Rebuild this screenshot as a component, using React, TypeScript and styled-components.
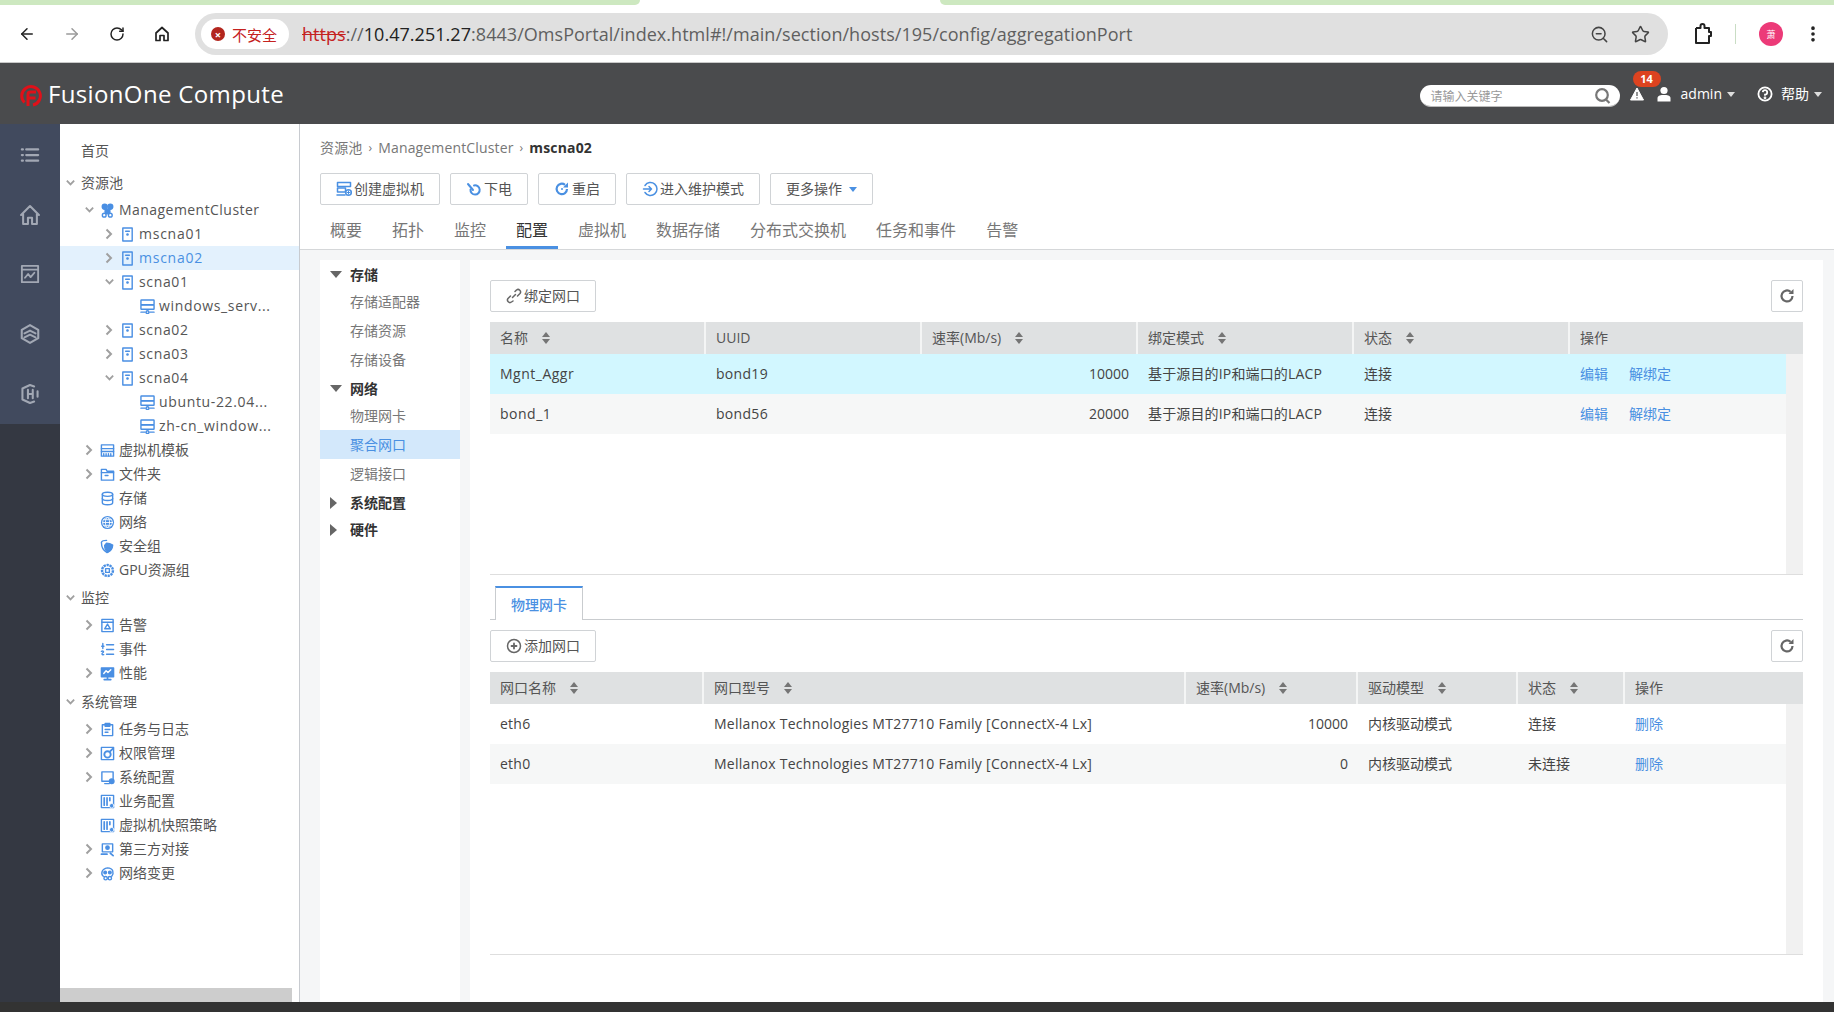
import React from "react";
import styled, { createGlobalStyle } from "styled-components";
import { ArrowLeft, ArrowRight, RotateCw, Star, MoreVertical, ZoomOut } from "lucide-react";

const FONT = `"Open Sans", "Noto Sans CJK SC", sans-serif`;

const Global = createGlobalStyle`
  html, body { margin: 0; padding: 0; background: #fff; }
  body { font-family: ${FONT}; font-size: 14px; color: #444; overflow: hidden; }
  * { box-sizing: border-box; }
`;

const Page = styled.div`
  width: 1834px;
  height: 1012px;
  display: flex;
  flex-direction: column;
  overflow: hidden;
`;

/* ---------- browser chrome ---------- */
const TabStrip = styled.div`
  height: 5px;
  display: flex;
  justify-content: space-between;
  background: #fff;
`;
const TabStripPiece = styled.div<{ $w: number; $side: "left" | "right" }>`
  width: ${(p) => p.$w}px;
  background: #cde8c0;
  border-bottom-${(p) => (p.$side === "left" ? "right" : "left")}-radius: 8px;
`;
const BrowserBar = styled.div`
  height: 58px;
  display: flex;
  align-items: center;
  background: #fff;
  border-bottom: 1px solid #c9c9c9;
  padding: 1px 0 0 18px;
`;
const NavButton = styled.span<{ $muted?: boolean }>`
  width: 18px;
  height: 18px;
  margin-right: 27px;
  display: flex;
  align-items: center;
  justify-content: center;
  color: ${(p) => (p.$muted ? "#9a9a9a" : "#222")};
`;
const AddressBar = styled.div`
  width: 1473px;
  height: 42px;
  margin-left: -3px;
  border-radius: 21px;
  background: #e0e0e0;
  display: flex;
  align-items: center;
  padding: 0 6px;
`;
const SecurityChip = styled.div`
  width: 88px;
  height: 30px;
  border-radius: 15px;
  background: #fff;
  display: flex;
  align-items: center;
  padding-left: 10px;
  gap: 7px;
  color: #c5221f;
  font-size: 15px;
  flex: none;
`;
const DangerDot = styled.span`
  width: 14px;
  height: 14px;
  border-radius: 50%;
  background: #b3261e;
  color: #fff;
  display: flex;
  align-items: center;
  justify-content: center;
  font-size: 11px;
  font-weight: 700;
  line-height: 1;
`;
const Url = styled.div`
  margin-left: 13px;
  font-size: 18px;
  letter-spacing: 0.04px;
  color: #5f5f5f;
  white-space: nowrap;
  flex: 1;
`;
const UrlScheme = styled.span`
  color: #c5221f;
  text-decoration: line-through;
`;
const UrlHost = styled.span`
  color: #222;
`;
const BarIcon = styled.span<{ $ml: number }>`
  display: flex;
  margin-left: ${(p) => p.$ml}px;
  color: #444;
`;
const BarDivider = styled.span`
  width: 1px;
  height: 20px;
  background: #c9ddc4;
  margin-left: 22px;
`;
const Avatar = styled.span`
  width: 24px;
  height: 24px;
  margin-left: 23px;
  border-radius: 50%;
  background: #ec3a78;
  color: #fff;
  font-size: 9px;
  display: flex;
  align-items: center;
  justify-content: center;
`;

/* ---------- product header ---------- */
const Header = styled.header`
  height: 61px;
  display: flex;
  align-items: center;
  background: #4a4b4d;
  padding: 0 12px 0 20px;
  color: #fff;
`;
const LogoMark = styled.span`
  display: flex;
  margin-top: 5px;
`;
const LogoText = styled.div`
  margin-left: 5px;
  font-size: 24px;
  line-height: 30px;
  letter-spacing: 0.35px;
`;
const HeaderRight = styled.div`
  margin-left: auto;
  display: flex;
  align-items: center;
`;
const SearchBox = styled.div`
  width: 200px;
  height: 22px;
  margin-top: 5px;
  border-radius: 11px;
  background: #fff;
  border-bottom: 1px solid #bbb;
  display: flex;
  align-items: center;
  justify-content: space-between;
  padding: 0 8px 0 11px;
  font-size: 12px;
  color: #999;
`;
const BellWrap = styled.span`
  position: relative;
  display: flex;
  margin-left: 10px;
  width: 14px;
  height: 14px;
`;
const Badge = styled.span`
  position: absolute;
  left: 3px;
  top: -16px;
  width: 28px;
  height: 16px;
  border-radius: 8px;
  background: #dc4320;
  color: #fff;
  font-size: 11px;
  font-weight: 700;
  line-height: 16px;
  text-align: center;
`;
const HeaderText = styled.span<{ $ml: number }>`
  margin-left: ${(p) => p.$ml}px;
  font-size: 14px;
  line-height: 20px;
`;
const HeaderIcon = styled.span<{ $ml: number }>`
  display: flex;
  margin-left: ${(p) => p.$ml}px;
`;
const WhiteCaret = styled.span`
  width: 0;
  height: 0;
  margin-left: 5px;
  margin-top: 2px;
  border-left: 4px solid transparent;
  border-right: 4px solid transparent;
  border-top: 5px solid #ddd;
`;

/* ---------- body ---------- */
const Body = styled.div`
  flex: 1;
  display: flex;
  min-height: 0;
`;
const Rail = styled.nav`
  width: 60px;
  background: #343842;
  flex: none;
`;
const RailTop = styled.div`
  height: 300px;
  background: #414a5e;
  color: #a2a8b4;
  display: flex;
  flex-direction: column;
  padding-top: 1px;
`;
const RailSlot = styled.span`
  height: 60px;
  display: flex;
  align-items: center;
  justify-content: center;
`;
const TreePanel = styled.aside`
  width: 240px;
  flex: none;
  background: #fff;
  border-right: 1px solid #c8cbd0;
  display: flex;
  flex-direction: column;
  padding-top: 15px;
`;
const TreeRow = styled.div<{ $level: number; $selected?: boolean; $heading?: boolean; $gap?: number }>`
  height: 24px;
  flex: none;
  display: flex;
  align-items: center;
  padding-left: ${(p) => [5, 24, 44, 64][p.$level]}px;
  margin-top: ${(p) => p.$gap ?? 0}px;
  margin-bottom: ${(p) => (p.$heading ? 3 : 0)}px;
  background: ${(p) => (p.$selected ? "#e3f1fd" : "transparent")};
  color: ${(p) => (p.$selected ? "#4a90e2" : "#555")};
`;
const ArrowSlot = styled.span`
  width: 16px;
  height: 16px;
  flex: none;
  display: flex;
  align-items: center;
  color: #999;
`;
const IconSlot = styled.span`
  width: 19px;
  flex: none;
  display: flex;
  color: #4a8fe3;
`;
const TreeLabel = styled.span<{ $spacing?: number }>`
  line-height: 20px;
  white-space: nowrap;
  letter-spacing: ${(p) => p.$spacing ?? 0}px;
`;
const TreeScroll = styled.div`
  margin-top: auto;
  height: 14px;
  flex: none;
  width: 232px;
  background: #cdcdcd;
`;

const Main = styled.main`
  flex: 1;
  min-width: 0;
  display: flex;
  flex-direction: column;
`;
const MainHead = styled.div`
  height: 126px;
  flex: none;
  background: #fff;
  border-bottom: 1px solid #d5d7d9;
  padding: 14px 0 0 20px;
`;
const Crumbs = styled.div`
  display: flex;
  align-items: center;
  height: 20px;
  color: #777;
  line-height: 20px;
  letter-spacing: 0.15px;
`;
const CrumbSep = styled.span`
  margin: 0 6px;
  font-size: 12px;
  color: #777;
`;
const CrumbCurrent = styled.span`
  font-weight: 700;
  color: #333;
`;
const Toolbar = styled.div`
  display: flex;
  gap: 10px;
  margin-top: 15px;
`;
const Button = styled.div<{ $icon?: boolean }>`
  height: 32px;
  flex: none;
  display: inline-flex;
  align-items: center;
  justify-content: center;
  gap: 2px;
  padding: 0 ${(p) => (p.$icon ? 0 : 15)}px;
  width: ${(p) => (p.$icon ? "32px" : "auto")};
  background: #fff;
  border: 1px solid #d0d3d6;
  border-radius: 2px;
  color: #555;
  line-height: 20px;
`;
const ButtonIcon = styled.span<{ $grey?: boolean }>`
  display: flex;
  color: ${(p) => (p.$grey ? "#666" : "#4a90e2")};
`;
const BlueCaret = styled.span`
  width: 0;
  height: 0;
  margin-left: 5px;
  border-left: 4px solid transparent;
  border-right: 4px solid transparent;
  border-top: 5px solid #4a90e2;
`;
const Tabs = styled.div`
  display: flex;
  gap: 10px;
  height: 44px;
`;
const Tab = styled.div<{ $active?: boolean }>`
  height: 44px;
  padding: 13px 10px 0;
  font-size: 16px;
  line-height: 24px;
  color: ${(p) => (p.$active ? "#333" : "#777")};
  border-bottom: 3px solid ${(p) => (p.$active ? "#4a90e2" : "transparent")};
`;
const ConfigArea = styled.div`
  flex: 1;
  min-height: 0;
  display: flex;
  gap: 10px;
  background: #f5f6f7;
  padding: 10px 11px 0 20px;
`;
const ConfigMenu = styled.div`
  width: 140px;
  flex: none;
  background: #fff;
`;
const MenuHeading = styled.div`
  height: 25px;
  margin-top: 2px;
  display: flex;
  align-items: center;
  padding-left: 10px;
  font-weight: 700;
  color: #333;
  line-height: 20px;
`;
const MenuTriangle = styled.span<{ $open?: boolean }>`
  width: 20px;
  flex: none;
  &::before {
    content: "";
    display: block;
    width: 0;
    height: 0;
    ${(p) =>
      p.$open
        ? `border-left: 6px solid transparent; border-right: 6px solid transparent; border-top: 7px solid #666;`
        : `border-top: 6px solid transparent; border-bottom: 6px solid transparent; border-left: 7px solid #666;`}
  }
`;
const MenuItem = styled.div<{ $active?: boolean }>`
  height: 29px;
  display: flex;
  align-items: center;
  padding-left: 30px;
  line-height: 20px;
  color: ${(p) => (p.$active ? "#4a90e2" : "#777")};
  background: ${(p) => (p.$active ? "#d3e8fb" : "transparent")};
`;
const ContentPanel = styled.section`
  flex: 1;
  min-width: 0;
  background: #fff;
  padding: 20px 20px 0;
`;
const TableTools = styled.div`
  display: flex;
  justify-content: space-between;
  margin-bottom: 10px;
`;
const HeadRow = styled.div<{ $cols: string }>`
  height: 32px;
  display: grid;
  grid-template-columns: ${(p) => p.$cols};
  background: #dfe1e2;
`;
const HeadCell = styled.div<{ $last?: boolean }>`
  display: flex;
  align-items: center;
  padding-left: 10px;
  color: #555;
  line-height: 20px;
  border-right: ${(p) => (p.$last ? "0" : "2px solid #f4f5f5")};
`;
const SortIcon = styled.span`
  display: flex;
  flex-direction: column;
  gap: 2px;
  margin-left: 14px;
  &::before,
  &::after {
    content: "";
    width: 0;
    height: 0;
    border-left: 4px solid transparent;
    border-right: 4px solid transparent;
  }
  &::before { border-bottom: 5px solid #757575; }
  &::after { border-top: 5px solid #757575; }
`;
const TableBody = styled.div<{ $h: number }>`
  height: ${(p) => p.$h}px;
  display: flex;
  border-bottom: 1px solid #dedede;
`;
const Rows = styled.div`
  flex: 1;
  min-width: 0;
`;
const Track = styled.div`
  width: 17px;
  flex: none;
  background: #f1f1f1;
`;
const Row = styled.div<{ $cols: string; $bg: string }>`
  height: 40px;
  display: grid;
  grid-template-columns: ${(p) => p.$cols};
  background: ${(p) => p.$bg};
`;
const Cell = styled.div<{ $right?: boolean; $pr?: number; $ls?: number }>`
  display: flex;
  align-items: center;
  justify-content: ${(p) => (p.$right ? "flex-end" : "flex-start")};
  padding: 0 ${(p) => p.$pr ?? 10}px 0 10px;
  color: #444;
  line-height: 20px;
  letter-spacing: ${(p) => p.$ls ?? 0}px;
  white-space: nowrap;
  overflow: hidden;
`;
const TableLink = styled.span`
  color: #4a90e2;
  margin-right: 21px;
`;
const SubTabs = styled.div`
  margin-top: 11px;
  height: 34px;
  border-bottom: 1px solid #c9cccf;
  padding-left: 5px;
  display: flex;
  margin-bottom: 10px;
`;
const SubTab = styled.div`
  width: 88px;
  height: 34px;
  border: 1px solid #c9cccf;
  border-top: 2px solid #4a90e2;
  border-bottom: 0;
  background: #fff;
  color: #4a90e2;
  font-size: 14px;
  font-weight: 500;
  display: flex;
  align-items: center;
  justify-content: center;
`;
const BottomBar = styled.div`
  height: 10px;
  flex: none;
  background: #333;
`;

/* ---------- icons ---------- */
const Svg = ({ s = 16, children, vb = "0 0 16 16", sw = 1.5 }: { s?: number; children: React.ReactNode; vb?: string; sw?: number }) => (
  <svg width={s} height={s} viewBox={vb} fill="none" stroke="currentColor" strokeWidth={sw} strokeLinecap="round" strokeLinejoin="round">
    {children}
  </svg>
);

const Down = () => (
  <svg width="11" height="8" viewBox="0 0 12 8" fill="none" stroke="#a0a0a0" strokeWidth="2"><path d="M2 1.500 L6 5.500 L10 1.500" /></svg>
);
const Right = () => (
  <svg width="8" height="12" viewBox="0 0 8 12" fill="none" stroke="#a0a0a0" strokeWidth="2" style={{ marginLeft: 1 }}><path d="M1.500 1.500 L6 6 L1.500 10.500" /></svg>
);

const GearDot = () => <circle cx="12.500" cy="12.500" r="2.400" fill="currentColor" stroke="#fff" strokeWidth="0.800" />;

const icons: Record<string, React.ReactNode> = {
  cluster: (<><circle cx="5" cy="4" r="2.600" fill="currentColor" /><circle cx="11" cy="4" r="2.600" fill="currentColor" /><circle cx="8" cy="9" r="2.600" fill="currentColor" /><circle cx="4.500" cy="13" r="2" /><circle cx="11" cy="13" r="2" /></>),
  host: (<><rect x="3" y="1" width="10" height="14" /><path d="M6 4.500h4" /><circle cx="8" cy="8" r="0.700" fill="currentColor" /></>),
  vm: (<><rect x="1" y="1" width="14" height="5" rx="0.500" /><rect x="1" y="6.500" width="14" height="4.500" rx="0.500" /><path d="M1 14h4.500M10.500 14h4.500" /><circle cx="8" cy="14" r="1.500" /></>),
  template: (<><rect x="1.500" y="2" width="13" height="12" /><path d="M1.500 6h13M1.500 9h13" /><path d="M4 11.500v2M6.500 11.500v2M9 11.500v2M11.500 11.500v2" /></>),
  folder: (<><path d="M1.500 2.500h5l1 2h7v9.500h-13z" /><path d="M1.500 6h13" /><path d="M5.500 9h3" /></>),
  storage: (<><ellipse cx="8" cy="3.500" rx="5.500" ry="2.200" /><path d="M2.500 3.500v9c0 1.200 2.500 2.200 5.500 2.200s5.500-1 5.500-2.200v-9" /><path d="M2.500 8c0 1.200 2.500 2.200 5.500 2.200s5.500-1 5.500-2.200" /></>),
  globe: (<><circle cx="8" cy="8" r="7" fill="currentColor" stroke="none" /><g stroke="#fff" strokeWidth="0.900"><circle cx="8" cy="8" r="5.200" /><ellipse cx="8" cy="8" rx="2.200" ry="5.200" /><path d="M3 8h10M3.800 5h8.400M3.800 11h8.400" /></g></>),
  shield: (<><path d="M7 1.500c-2.600 0-5 1-5.500 2 0 5 2 9 6 11 1.500-1 3-2.400 4-4" /><path d="M7 4.500c2 0 5 1 6.500 2 -.2 3-2 6-5 7.500 -2-1-3.500-4-3.500-7z" fill="currentColor" /></>),
  gpu: (<><circle cx="8" cy="8" r="5.800" strokeWidth="2.600" strokeDasharray="2.400 0.800" strokeLinecap="butt" /><rect x="6" y="6" width="4" height="4" /></>),
  alarm: (<><rect x="2" y="1.500" width="12" height="13" /><path d="M2 4.500h12" /><path d="M5 11.500 L8 6.500 L11 11.500z" /></>),
  events: (<><path d="M7 3h7.500M7 8h7.500M7 13h7.500" /><path d="M3 1.500v5.500M1.500 10c2-1 3 .5 1.500 1.500s-1 2.500 1 2" /><path d="M1.800 4.500h2.400" /></>),
  perf: (<><rect x="1.500" y="2" width="13" height="9.500" fill="currentColor" /><path d="M8 11.500v2.500M4.500 14.500h7" strokeWidth="1.800" /><path d="M4 8l2.500-3 2 2 3-3" stroke="#fff" /></>),
  tasks: (<><rect x="2.500" y="3" width="11" height="11.500" /><path d="M5.500 1.500h5v3h-5z" fill="currentColor" /><path d="M5.500 8h5M5.500 11h3" /></>),
  auth: (<><path d="M14.500 1.500h-13v13h13z" /><circle cx="8" cy="9" r="3.400" strokeWidth="2" /><path d="M11 5.500l2.500-2.500" strokeWidth="2" /></>),
  sysconfig: (<><path d="M14 9V2H2v10h8" /><path d="M5 14.500h5" /><circle cx="12.500" cy="12" r="2.400" fill="currentColor" /></>),
  bizconfig: (<><rect x="1.500" y="1.500" width="13" height="13" /><path d="M4.500 4v8M7.500 4v8M10.500 4v3" strokeWidth="1.800" /><GearDot /></>),
  third: (<><rect x="2.500" y="2" width="11" height="8.500" /><circle cx="8" cy="6" r="1.800" fill="currentColor" /><path d="M1.500 13h6M11 12l3 2.500" strokeWidth="1.800" /></>),
  netchange: (<><path d="M3.500 11C1 9 1 3 8 2c6.500 0 7 6 4.500 9" /><circle cx="5.500" cy="7" r="1.400" fill="currentColor" /><circle cx="10.500" cy="7" r="1.400" fill="currentColor" /><circle cx="6" cy="13" r="1.800" /><circle cx="10.500" cy="13" r="1.800" /></>),
};

type Node = { label: string; level: number; arrow?: "open" | "closed"; icon?: string; selected?: boolean; heading?: boolean; spacing?: number; gap?: number };

const tree: Node[] = [
  { label: "首页", level: 0, heading: true, gap: 0 },
  { label: "资源池", level: 0, heading: true, arrow: "open", gap: 5 },
  { label: "ManagementCluster", level: 1, arrow: "open", icon: "cluster", spacing: 0.45 },
  { label: "mscna01", level: 2, arrow: "closed", icon: "host", spacing: 0.75 },
  { label: "mscna02", level: 2, arrow: "closed", icon: "host", spacing: 0.75, selected: true },
  { label: "scna01", level: 2, arrow: "open", icon: "host", spacing: 0.65 },
  { label: "windows_serv...", level: 3, icon: "vm", spacing: 0.65 },
  { label: "scna02", level: 2, arrow: "closed", icon: "host", spacing: 0.65 },
  { label: "scna03", level: 2, arrow: "closed", icon: "host", spacing: 0.65 },
  { label: "scna04", level: 2, arrow: "open", icon: "host", spacing: 0.65 },
  { label: "ubuntu-22.04...", level: 3, icon: "vm", spacing: 0.65 },
  { label: "zh-cn_window...", level: 3, icon: "vm", spacing: 0.65 },
  { label: "虚拟机模板", level: 1, arrow: "closed", icon: "template" },
  { label: "文件夹", level: 1, arrow: "closed", icon: "folder" },
  { label: "存储", level: 1, icon: "storage" },
  { label: "网络", level: 1, icon: "globe" },
  { label: "安全组", level: 1, icon: "shield" },
  { label: "GPU资源组", level: 1, icon: "gpu" },
  { label: "监控", level: 0, heading: true, arrow: "open", gap: 4 },
  { label: "告警", level: 1, arrow: "closed", icon: "alarm" },
  { label: "事件", level: 1, icon: "events" },
  { label: "性能", level: 1, arrow: "closed", icon: "perf" },
  { label: "系统管理", level: 0, heading: true, arrow: "open", gap: 5 },
  { label: "任务与日志", level: 1, arrow: "closed", icon: "tasks" },
  { label: "权限管理", level: 1, arrow: "closed", icon: "auth" },
  { label: "系统配置", level: 1, arrow: "closed", icon: "sysconfig" },
  { label: "业务配置", level: 1, icon: "bizconfig" },
  { label: "虚拟机快照策略", level: 1, icon: "bizconfig" },
  { label: "第三方对接", level: 1, arrow: "closed", icon: "third" },
  { label: "网络变更", level: 1, arrow: "closed", icon: "netchange" },
];

const RefreshIcon = () => (
  <svg width="18" height="18" viewBox="0 0 18 18" fill="none">
    <path d="M14.500 9 A5.500 5.500 0 1 1 12.600 4.800" stroke="#666" strokeWidth="2.200" />
    <path d="M15.500 2 V7 H10.500 Z" fill="#666" />
  </svg>
);

const COLS_A = "216px 216px 216px 216px 216px 1fr";
const COLS_B = "214px 482px 172px 160px 107px 1fr";

export default function App() {
  return (
    <Page>
      <Global />
      <TabStrip>
        <TabStripPiece $w={640} $side="left" />
        <TabStripPiece $w={894} $side="right" />
      </TabStrip>
      <BrowserBar>
        <NavButton><ArrowLeft size={18} strokeWidth={2} /></NavButton>
        <NavButton $muted><ArrowRight size={18} strokeWidth={2} /></NavButton>
        <NavButton><RotateCw size={16} strokeWidth={2.2} /></NavButton>
        <NavButton>
          <svg width="18" height="18" viewBox="0 0 18 18" fill="none" stroke="currentColor" strokeWidth="1.700" strokeLinejoin="round">
            <path d="M3 8 L9 2.500 L15 8 V15.500 H11 V10.500 H7 V15.500 H3 Z" />
          </svg>
        </NavButton>
        <AddressBar>
          <SecurityChip>
            <DangerDot>×</DangerDot>
            不安全
          </SecurityChip>
          <Url>
            <UrlScheme>https</UrlScheme>://<UrlHost>10.47.251.27</UrlHost>:8443/OmsPortal/index.html#!/main/section/hosts/195/config/aggregationPort
          </Url>
          <BarIcon $ml={0}><ZoomOut size={19} strokeWidth={1.9} /></BarIcon>
          <BarIcon $ml={22}><Star size={19} strokeWidth={1.9} /></BarIcon>
          <BarIcon $ml={12} />
        </AddressBar>
        <BarIcon $ml={25}>
          <svg width="20" height="22" viewBox="0 0 20 22" fill="none" stroke="#222" strokeWidth="2" strokeLinejoin="round">
            <path d="M3 5 H7.500 V3 A2 2 0 0 1 11.500 3 V5 H16 V9 H18 V13 H16 V20 H3 V14" />
            <path d="M3 14 V5" />
          </svg>
        </BarIcon>
        <BarDivider />
        <Avatar>萧</Avatar>
        <BarIcon $ml={20}><MoreVertical size={20} strokeWidth={2.4} color="#222" /></BarIcon>
      </BrowserBar>

      <Header>
        <LogoMark>
          <svg width="23" height="22" viewBox="0 0 23 22" fill="none" stroke="#e01019" strokeWidth="3">
            <path d="M4.500 17.500 A9.300 9.300 0 1 1 13 20" />
            <path d="M8 21 V9.500 A2.500 2.500 0 0 1 10.500 7 H16" />
            <path d="M8 13 H15.500" />
          </svg>
        </LogoMark>
        <LogoText>FusionOne Compute</LogoText>
        <HeaderRight>
          <SearchBox>
            请输入关键字
            <svg width="18" height="18" viewBox="0 0 18 18" fill="none" stroke="#777" strokeWidth="2.200">
              <circle cx="8" cy="8" r="5.800" />
              <path d="M12 12.500 L15.500 16" />
            </svg>
          </SearchBox>
          <BellWrap>
            <svg width="14" height="14" viewBox="0 0 14 14">
              <path d="M7 1 L13.500 13 H0.500 Z" fill="#fff" stroke="#fff" strokeLinejoin="round" />
              <path d="M7 5 V9 M7 10.300 V11.500" stroke="#4a4b4d" strokeWidth="1.200" />
            </svg>
            <Badge>14</Badge>
          </BellWrap>
          <HeaderIcon $ml={13}>
            <svg width="14" height="16" viewBox="0 0 14 16" fill="#fff"><circle cx="7" cy="4.500" r="3.600" /><path d="M0.500 15.500 V12 C0.500 9.500 4 9 7 9 S13.500 9.500 13.500 12 V15.500 Z" /></svg>
          </HeaderIcon>
          <HeaderText $ml={10}>admin</HeaderText>
          <WhiteCaret />
          <HeaderIcon $ml={22}>
            <svg width="16" height="16" viewBox="0 0 16 16" fill="none" stroke="#fff" strokeWidth="1.800"><circle cx="8" cy="8" r="6.600" /><path d="M5.800 6.200 A2.200 2.200 0 1 1 8 8.600 V9.800" /><circle cx="8" cy="11.800" r="0.500" fill="#fff" /></svg>
          </HeaderIcon>
          <HeaderText $ml={8}>帮助</HeaderText>
          <WhiteCaret />
        </HeaderRight>
      </Header>

      <Body>
        <Rail>
          <RailTop>
            <RailSlot>
              <Svg s={20}><path d="M5 3.500h9.500M5 8h9.500M5 12.500h9.500" strokeWidth="1.800" /><path d="M1.500 3.500h.8M1.500 8h.8M1.500 12.500h.8" strokeWidth="1.800" /></Svg>
            </RailSlot>
            <RailSlot>
              <Svg s={22}><path d="M1.500 8 L8 1.500 L14.500 8 M3 7 V14.500 H6.500 V10 H9.500 V14.500 H13 V7" /></Svg>
            </RailSlot>
            <RailSlot>
              <Svg s={20}><rect x="1.500" y="1.500" width="13" height="13" /><path d="M1.500 4.500h13" /><path d="M4 11 L6.500 8 L8.500 10.500 L11.500 7" /></Svg>
            </RailSlot>
            <RailSlot>
              <Svg s={22}><path d="M8 1.500 L14 5 V11 L8 14.500 L2 11 V5 Z" /><path d="M4 7.500 L8 5.500 L12 7.500 M4 10.500 L8 8.500 L12 10.500" /></Svg>
            </RailSlot>
            <RailSlot>
              <Svg s={22}><path d="M11 2.500 L8 1.500 L2.500 4 V12 L8 14.500 L11 13.500" /><path d="M13.500 6 V10 M6.500 5 V11 M10 5 V11 M6.500 8 H10" /></Svg>
            </RailSlot>
          </RailTop>
        </Rail>

        <TreePanel>
          {tree.map((n) => (
            <TreeRow key={n.label} $level={n.level} $selected={n.selected} $heading={n.heading} $gap={n.gap}>
              <ArrowSlot>{n.arrow === "open" ? <Down /> : n.arrow === "closed" ? <Right /> : null}</ArrowSlot>
              {n.icon && (
                <IconSlot>
                  <Svg s={15}>{icons[n.icon]}</Svg>
                </IconSlot>
              )}
              <TreeLabel $spacing={n.spacing}>{n.label}</TreeLabel>
            </TreeRow>
          ))}
          <TreeScroll />
        </TreePanel>

        <Main>
          <MainHead>
            <Crumbs>
              资源池<CrumbSep>›</CrumbSep>ManagementCluster<CrumbSep>›</CrumbSep>
              <CrumbCurrent>mscna02</CrumbCurrent>
            </Crumbs>
            <Toolbar>
              <Button>
                <ButtonIcon>
                  <Svg><rect x="1.500" y="1.500" width="13" height="4" /><rect x="1.500" y="7" width="8" height="4" /><path d="M1 14h8" /><circle cx="12.500" cy="11.500" r="2.800" fill="#fff" /><path d="M11 11.500h3M12.500 10v3" strokeWidth="1" /></Svg>
                </ButtonIcon>
                创建虚拟机
              </Button>
              <Button>
                <ButtonIcon>
                  <Svg sw={2}><path d="M8 4.500 A4.600 4.600 0 1 1 4.500 8.500" /><path d="M2 3 L7 9" /></Svg>
                </ButtonIcon>
                下电
              </Button>
              <Button>
                <ButtonIcon>
                  <svg width="16" height="16" viewBox="0 0 16 16" fill="none">
                    <path d="M13 8 A5.200 5.200 0 1 1 11 3.800" stroke="currentColor" strokeWidth="2.200" />
                    <path d="M14 1.500 V6.500 H9 Z" fill="currentColor" />
                    <circle cx="8" cy="8" r="1" fill="currentColor" />
                  </svg>
                </ButtonIcon>
                重启
              </Button>
              <Button>
                <ButtonIcon>
                  <Svg><path d="M3 4.500 A6.500 6.500 0 1 1 3 11.500" /><path d="M1.500 8 H9.500 M7 5.500 L9.500 8 L7 10.500" /></Svg>
                </ButtonIcon>
                进入维护模式
              </Button>
              <Button>
                更多操作
                <BlueCaret />
              </Button>
            </Toolbar>
            <Tabs>
              {["概要", "拓扑", "监控", "配置", "虚拟机", "数据存储", "分布式交换机", "任务和事件", "告警"].map((t) => (
                <Tab key={t} $active={t === "配置"}>{t}</Tab>
              ))}
            </Tabs>
          </MainHead>

          <ConfigArea>
            <ConfigMenu>
              <MenuHeading><MenuTriangle $open />存储</MenuHeading>
              <MenuItem>存储适配器</MenuItem>
              <MenuItem>存储资源</MenuItem>
              <MenuItem>存储设备</MenuItem>
              <MenuHeading><MenuTriangle $open />网络</MenuHeading>
              <MenuItem>物理网卡</MenuItem>
              <MenuItem $active>聚合网口</MenuItem>
              <MenuItem>逻辑接口</MenuItem>
              <MenuHeading><MenuTriangle />系统配置</MenuHeading>
              <MenuHeading><MenuTriangle />硬件</MenuHeading>
            </ConfigMenu>

            <ContentPanel>
              <TableTools>
                <Button>
                  <ButtonIcon $grey>
                    <Svg><path d="M6.500 9.500 L9.500 6.500" /><path d="M9 3.500 L10.500 2 A2.500 2.500 0 0 1 14 5.500 L11.500 8" /><path d="M7 13 L5.500 14 A2.500 2.500 0 0 1 2 10.500 L4.500 8" /></Svg>
                  </ButtonIcon>
                  绑定网口
                </Button>
                <Button $icon><RefreshIcon /></Button>
              </TableTools>
              <HeadRow $cols={COLS_A}>
                <HeadCell>名称<SortIcon /></HeadCell>
                <HeadCell>UUID</HeadCell>
                <HeadCell>速率(Mb/s)<SortIcon /></HeadCell>
                <HeadCell>绑定模式<SortIcon /></HeadCell>
                <HeadCell>状态<SortIcon /></HeadCell>
                <HeadCell $last>操作</HeadCell>
              </HeadRow>
              <TableBody $h={221}>
                <Rows>
                  <Row $cols={COLS_A} $bg="#d2f7ff">
                    <Cell $ls={0.5}>Mgnt_Aggr</Cell>
                    <Cell $ls={0.3}>bond19</Cell>
                    <Cell $right $pr={9}>10000</Cell>
                    <Cell $ls={0.15}>基于源目的IP和端口的LACP</Cell>
                    <Cell>连接</Cell>
                    <Cell><TableLink>编辑</TableLink><TableLink>解绑定</TableLink></Cell>
                  </Row>
                  <Row $cols={COLS_A} $bg="#f6f7f7">
                    <Cell $ls={0.5}>bond_1</Cell>
                    <Cell $ls={0.3}>bond56</Cell>
                    <Cell $right $pr={9}>20000</Cell>
                    <Cell $ls={0.15}>基于源目的IP和端口的LACP</Cell>
                    <Cell>连接</Cell>
                    <Cell><TableLink>编辑</TableLink><TableLink>解绑定</TableLink></Cell>
                  </Row>
                </Rows>
                <Track />
              </TableBody>

              <SubTabs><SubTab>物理网卡</SubTab></SubTabs>

              <TableTools>
                <Button>
                  <ButtonIcon $grey>
                    <Svg><circle cx="8" cy="8" r="6.500" /><path d="M5.500 8h5M8 5.500v5" strokeWidth="1.800" /></Svg>
                  </ButtonIcon>
                  添加网口
                </Button>
                <Button $icon><RefreshIcon /></Button>
              </TableTools>
              <HeadRow $cols={COLS_B}>
                <HeadCell>网口名称<SortIcon /></HeadCell>
                <HeadCell>网口型号<SortIcon /></HeadCell>
                <HeadCell>速率(Mb/s)<SortIcon /></HeadCell>
                <HeadCell>驱动模型<SortIcon /></HeadCell>
                <HeadCell>状态<SortIcon /></HeadCell>
                <HeadCell $last>操作</HeadCell>
              </HeadRow>
              <TableBody $h={251}>
                <Rows>
                  <Row $cols={COLS_B} $bg="#fff">
                    <Cell $ls={0.25}>eth6</Cell>
                    <Cell $ls={0.27}>Mellanox Technologies MT27710 Family [ConnectX-4 Lx]</Cell>
                    <Cell $right>10000</Cell>
                    <Cell>内核驱动模式</Cell>
                    <Cell>连接</Cell>
                    <Cell><TableLink>删除</TableLink></Cell>
                  </Row>
                  <Row $cols={COLS_B} $bg="#f6f7f7">
                    <Cell $ls={0.25}>eth0</Cell>
                    <Cell $ls={0.27}>Mellanox Technologies MT27710 Family [ConnectX-4 Lx]</Cell>
                    <Cell $right>0</Cell>
                    <Cell>内核驱动模式</Cell>
                    <Cell>未连接</Cell>
                    <Cell><TableLink>删除</TableLink></Cell>
                  </Row>
                </Rows>
                <Track />
              </TableBody>
            </ContentPanel>
          </ConfigArea>
        </Main>
      </Body>
      <BottomBar />
    </Page>
  );
}
